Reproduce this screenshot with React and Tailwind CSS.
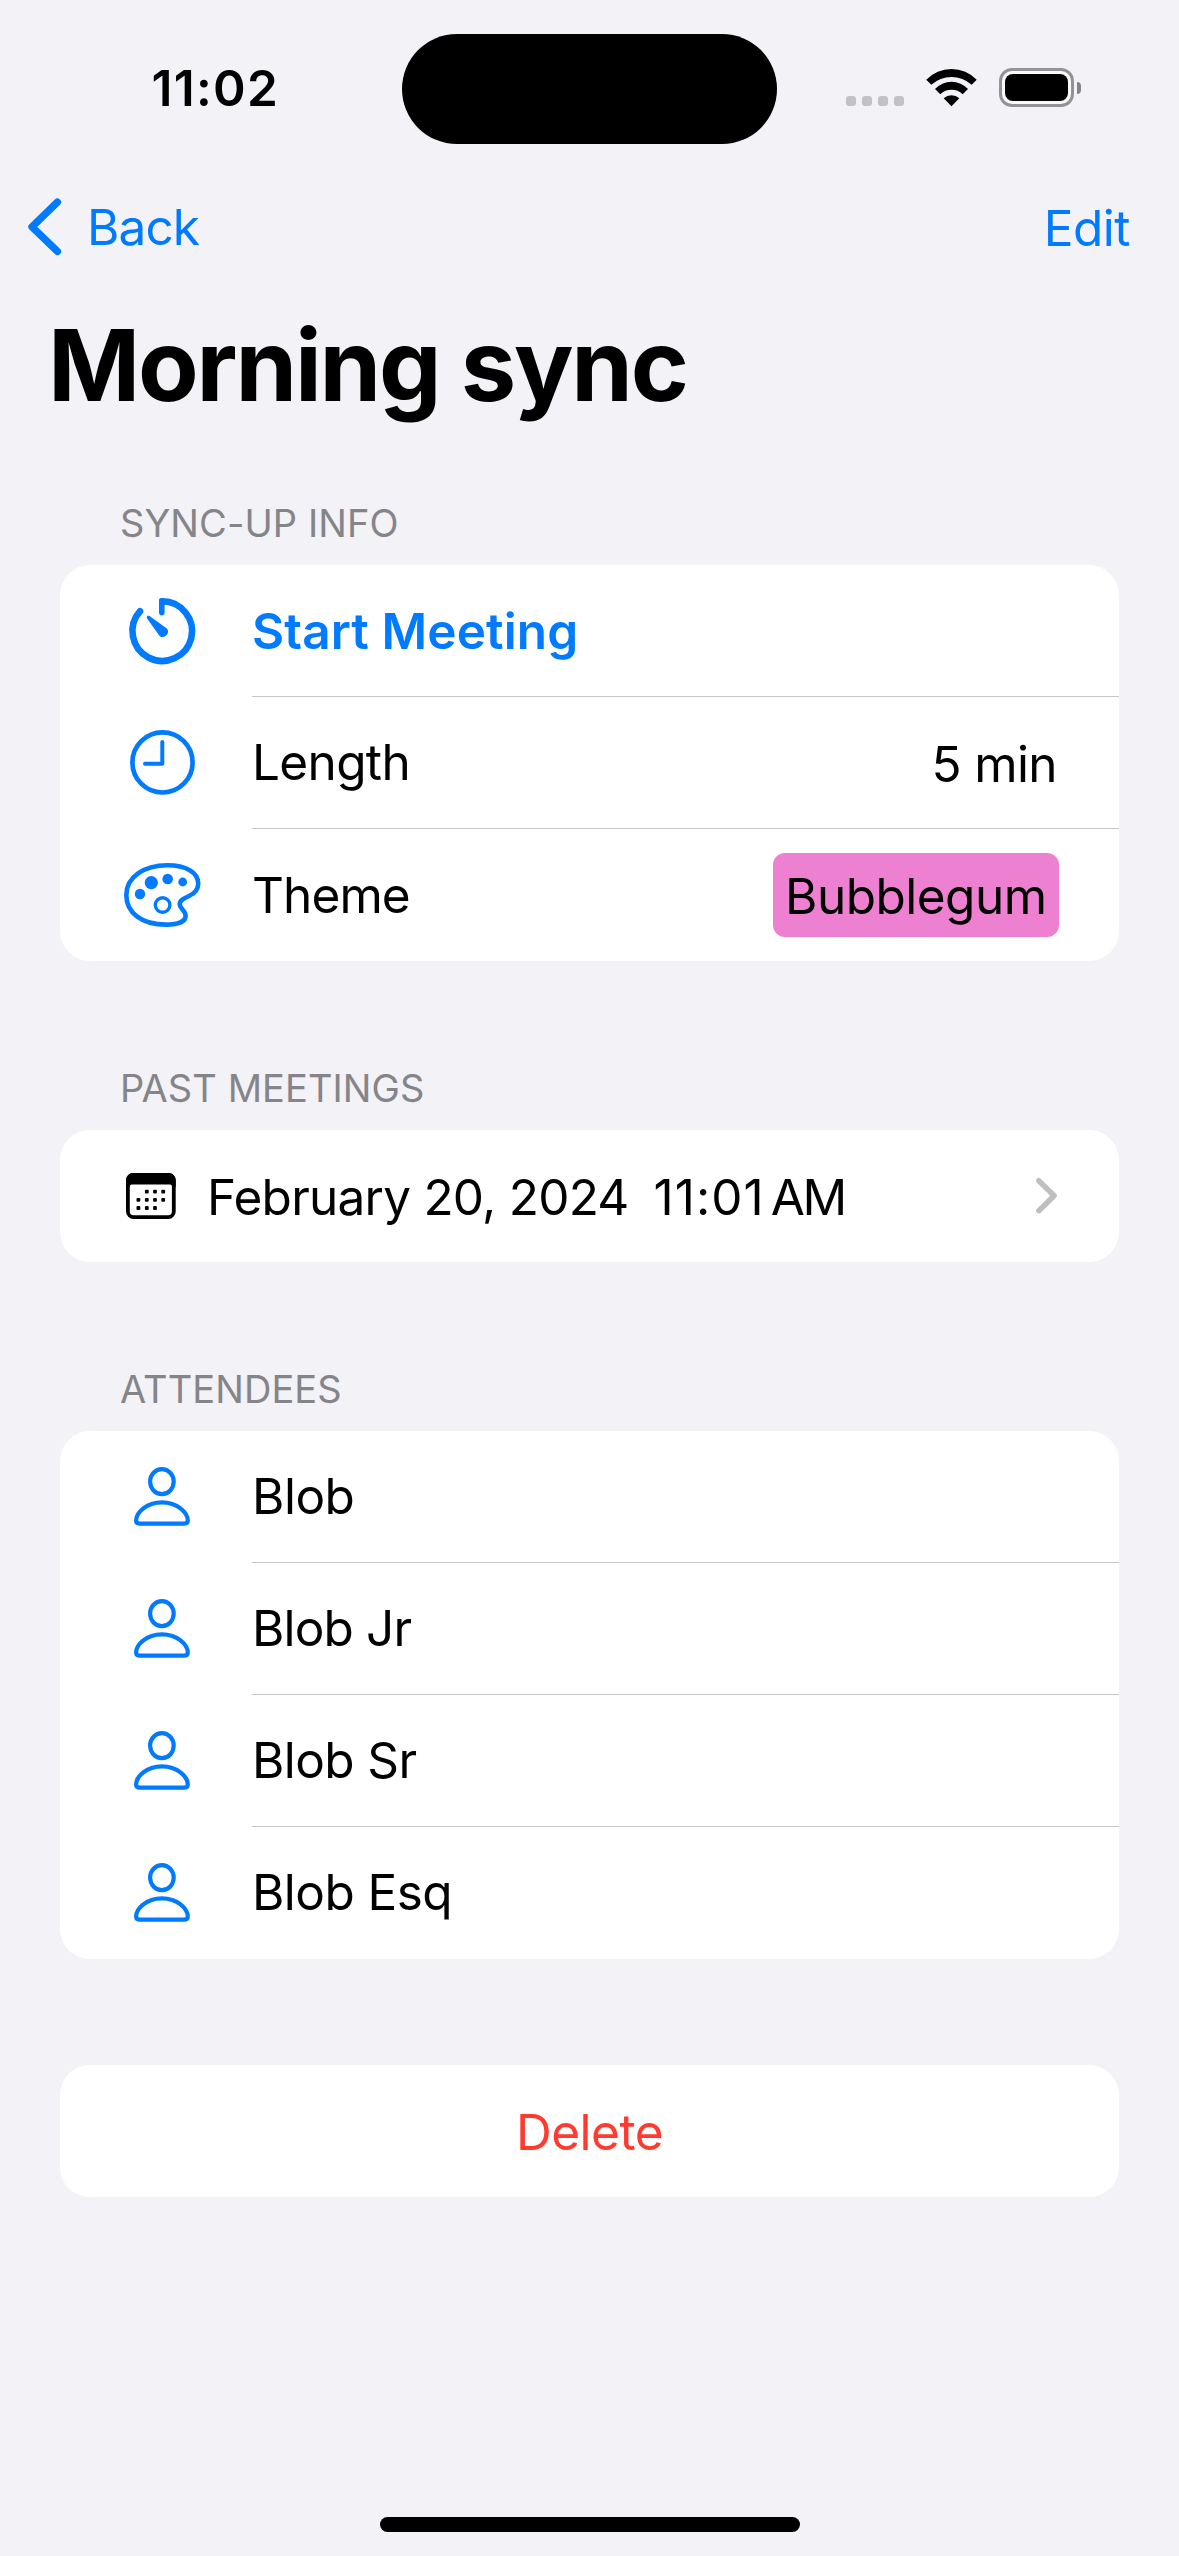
import React from "react";

const BLUE = "#007aff";

function StatusBar() {
  return (
    <div className="flex h-[178px] shrink-0 items-center">
      <div className="w-[402px] pb-[2px] pl-[151.5px] text-[49.5px] leading-[60px] font-semibold tracking-[1.3px]">
        11:02
      </div>
      <div className="h-[110px] w-[375px] rounded-full bg-black" />
      <div className="mb-[3px] ml-[69px] flex h-[39px] items-end">
        <div className="mb-px flex gap-[6px]">
          {[0, 1, 2, 3].map((i) => (
            <span key={i} className="size-[10px] rounded-[3px] bg-[#c2c2c6]" />
          ))}
        </div>
        <svg className="ml-[22px] h-[39px] w-[51px]" viewBox="0 0 51 39">
          <path d="M0.3 11.7A35 35 0 0 1 50.7 11.7L45.7 16.8A30 30 0 0 0 5.3 16.8Z" />
          <path d="M9 21A22.5 22.5 0 0 1 42 21L36.7 26.3A16.3 16.3 0 0 0 14.3 26.3Z" />
          <path d="M17.7 30.2A11.5 11.5 0 0 1 33.3 30.2L25.5 38.2Z" />
        </svg>
        <div className="ml-[22px] flex items-center">
          <div className="h-[39px] w-[75px] rounded-[13px] border-[3px] border-[#939396] bg-[#f9f9fb] p-[3px]">
            <div className="h-full w-full rounded-[8px] bg-black" />
          </div>
          <div className="ml-[3px] h-[12px] w-[4px] rounded-r-full bg-[#848487]" />
        </div>
      </div>
    </div>
  );
}

function NavBar() {
  return (
    <div className="flex h-[98px] shrink-0 items-center justify-between pr-[49px] pl-[28px] text-[49.5px] leading-[60px] text-[#007aff]">
      <div className="flex items-center">
        <svg
          className="h-[58px] w-[34px]"
          viewBox="0 0 34 58"
          fill="none"
          stroke={BLUE}
          strokeWidth="7.4"
          strokeLinecap="round"
          strokeLinejoin="round"
        >
          <path d="M29.4 4.2L4 28.8L29.4 53.4" />
        </svg>
        <span className="ml-[25px] tracking-[-0.9px]">Back</span>
      </div>
      <span className="pt-[2px] tracking-[-0.5px]">Edit</span>
    </div>
  );
}

function TimerIcon() {
  return (
    <g fill="none" stroke={BLUE} strokeLinecap="round">
      <path strokeWidth="6.6" d="M20 46.3A29.8 29.8 0 1 0 42.2 36.3" />
      <path strokeWidth="5.6" d="M41.8 35.8V47.6" />
      <path
        fill={BLUE}
        stroke="none"
        d="M29.5 51.1L47.2 63.8A5.4 5.4 0 0 1 39.8 71.2L27.1 53.5A1.7 1.7 0 0 1 29.5 51.1Z"
      />
    </g>
  );
}

function ClockIcon() {
  return (
    <g fill="none" stroke={BLUE} strokeLinecap="round" strokeLinejoin="round">
      <circle cx="42.5" cy="65.4" r="30.1" strokeWidth="4.7" />
      <path strokeWidth="4" d="M42.3 45V66.7H25" />
    </g>
  );
}

function PaletteIcon() {
  return (
    <g fill={BLUE}>
      <path
        fill="none"
        stroke={BLUE}
        strokeWidth="4.6"
        d="M6.3 66C6.3 48 24 36.3 47.3 36.3C66 36.3 78.2 43.5 78.2 54.5C78.2 61 75 64.3 69 67C63 69.8 59.7 71.5 59.7 75C59.7 79.5 65.6 81.5 65.6 86.7C65.6 92.5 58 95.6 46 95.6C22 95.6 6.3 84 6.3 66Z"
      />
      <circle cx="20" cy="65" r="5.2" />
      <circle cx="31.3" cy="53.7" r="6.6" />
      <circle cx="47.7" cy="50" r="5.3" />
      <circle cx="62.7" cy="53" r="4.4" />
      <circle cx="42.6" cy="76" r="7.3" fill="none" stroke={BLUE} strokeWidth="3.4" />
    </g>
  );
}

function PersonIcon() {
  return (
    <g fill="none" stroke={BLUE} strokeWidth="4.2">
      <ellipse cx="41.9" cy="50.6" rx="11.8" ry="12.5" />
      <path d="M20 92.7C17.4 92.7 16.1 91.7 16.1 89.5C16.1 82 26 71.4 41.9 71.4C57.8 71.4 67.8 82 67.8 89.5C67.8 91.7 66.5 92.7 63.9 92.7Z" />
    </g>
  );
}

function CalendarIcon() {
  const dots = [
    [26.8, 61.7], [35, 61.7], [43.2, 61.7],
    [18.4, 69.8], [26.8, 69.8], [35, 69.8], [43.2, 69.8],
    [18.4, 78], [26.8, 78], [35, 78],
  ];
  return (
    <svg className="h-[132px] w-[87px]" viewBox="0 0 87 132">
      <rect x="7.9" y="44.9" width="45.9" height="42.2" rx="5.6" fill="none" stroke="#000" strokeWidth="3.8" />
      <path d="M6 56.8V50A7 7 0 0 1 13 43H48.7A7 7 0 0 1 55.7 50V56.8H52V56.4A2 2 0 0 0 50 54.4H11.8A2 2 0 0 0 9.8 56.4V56.8Z" />
      {dots.map(([x, y]) => (
        <rect key={`${x}-${y}`} x={x - 1.9} y={y - 1.9} width="3.8" height="3.8" rx="1" />
      ))}
    </svg>
  );
}

function Card({ children }) {
  return <div className="mx-[60px] overflow-hidden rounded-[30px] bg-white">{children}</div>;
}

function Section({ title, children }) {
  return (
    <section className="shrink-0">
      <h2 className="mb-[19px] pl-[120px] text-[38px] leading-[46px] tracking-[0.08px] text-[#858589]">{title}</h2>
      <Card>{children}</Card>
    </section>
  );
}

function Row({ icon, label, labelClass = "", nudge = "", last = false, children }) {
  return (
    <div className="flex h-[132px] pl-[60px] text-[49.5px] leading-[60px]">
      <svg className="mr-[52px] h-[132px] w-[80px] shrink-0 overflow-visible" viewBox="0 0 80 132">
        {icon}
      </svg>
      <div
        className={`flex flex-1 items-center justify-between pr-[60px] ${nudge} ${
          last ? "" : "shadow-[inset_0_-1px_0_#c6c6c8]"
        }`}
      >
        <span className={labelClass}>{label}</span>
        {children}
      </div>
    </div>
  );
}

const attendees = [
  { name: "Blob", spacing: "tracking-[-0.5px]" },
  { name: "Blob Jr", spacing: "tracking-[-0.85px]" },
  { name: "Blob Sr", spacing: "tracking-[-0.6px]" },
  { name: "Blob Esq", spacing: "tracking-[-0.55px]" },
];

export default function App() {
  return (
    <main className="flex h-[2556px] w-[1179px] flex-col overflow-hidden bg-[#f2f2f7] font-['Inter',sans-serif] text-black">
      <StatusBar />
      <NavBar />
      <h1 className="mt-[29px] mb-[75px] pl-[48px] text-[99px] leading-[120px] font-bold tracking-[-2.18px]">
        Morning sync
      </h1>

      <div className="flex flex-col gap-[104px]">
        <Section title="SYNC-UP INFO">
          <Row
            icon={<TimerIcon />}
            label="Start Meeting"
            labelClass="font-semibold tracking-[0.12px] text-[#007aff]"
          />
          <Row icon={<ClockIcon />} label="Length" labelClass="tracking-[-0.65px]" nudge="pb-[2px]">
            <span className="pt-[4px] pr-[2px] tracking-[-0.6px]">5 min</span>
          </Row>
          <Row icon={<PaletteIcon />} label="Theme" labelClass="tracking-[-0.9px]" last>
            <span className="flex h-[84px] w-[286px] items-center rounded-[12px] bg-[#ed80d1] pt-[2px] pl-[12px] tracking-[-0.5px]">
              Bubblegum
            </span>
          </Row>
        </Section>

        <Section title="PAST MEETINGS">
          <div className="flex h-[132px] items-center pl-[60px] text-[49.5px] leading-[60px]">
            <CalendarIcon />
            <span className="pt-[2px] tracking-[-0.76px]">February 20, 2024</span>
            <span className="ml-[25px] pt-[2px] tracking-[1.06px]">11:01</span>
            <span className="ml-[6px] pt-[2px] tracking-[-2.45px]">AM</span>
            <svg
              className="mr-[60px] ml-auto h-[132px] w-[25px]"
              viewBox="0 0 25 132"
              fill="none"
              stroke="#bfbfbf"
              strokeWidth="5.4"
              strokeLinecap="round"
              strokeLinejoin="round"
            >
              <path d="M4.8 50.7L20.2 65.7L4.8 80.7" />
            </svg>
          </div>
        </Section>

        <Section title="ATTENDEES">
          {attendees.map((a, i) => (
            <Row
              key={a.name}
              icon={<PersonIcon />}
              label={a.name}
              labelClass={a.spacing}
              nudge="pb-[2px]"
              last={i === attendees.length - 1}
            />
          ))}
        </Section>
      </div>

      <div className="mt-[106px] shrink-0">
        <Card>
          <div className="flex h-[132px] items-center justify-center pt-[2px] text-[49.5px] leading-[60px] tracking-[-0.49px] text-[#ff3b30]">
            Delete
          </div>
        </Card>
      </div>

      <div className="mx-auto mt-auto mb-[24px] h-[15px] w-[420px] shrink-0 rounded-full bg-black" />
    </main>
  );
}
